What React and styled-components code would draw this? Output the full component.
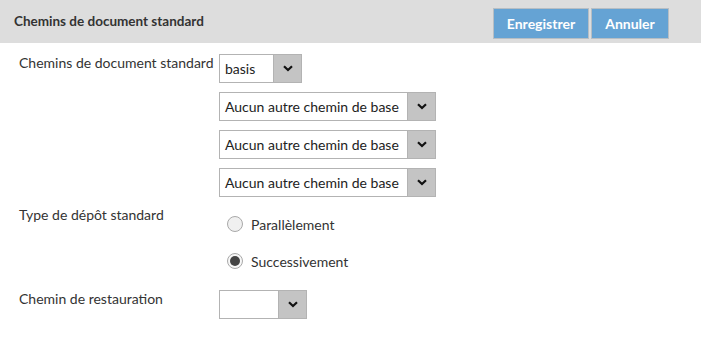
import React from "react";
import styled, { createGlobalStyle } from "styled-components";

const GlobalStyle = createGlobalStyle`
  body {
    margin: 0;
    background: #ffffff;
    font-family: Lato, "Open Sans", sans-serif;
    color: #333333;
  }
`;

const Page = styled.div`
  width: 701px;
  height: 350px;
  background: #ffffff;
`;

const Header = styled.div`
  height: 43px;
  background: #dddddd;
  display: flex;
  align-items: center;
  justify-content: space-between;
  padding: 0 32px 0 14px;
  box-sizing: border-box;
`;

const Title = styled.h1`
  margin: 0;
  font-size: 13.5px;
  font-weight: 700;
  color: #333333;
  padding-bottom: 2px;
`;

const Actions = styled.div`
  display: flex;
  gap: 2px;
  align-self: flex-start;
  margin-top: 8px;
`;

const ActionButton = styled.button`
  height: 31px;
  width: ${({ w }) => w}px;
  background: #65a3d4;
  border: 1px solid #b7bec4;
  color: #ffffff;
  font-family: inherit;
  font-size: 14px;
  font-weight: 700;
  padding: 0;
  cursor: pointer;
`;

const Form = styled.div`
  padding: 11px 0 0 19px;
  display: grid;
  grid-template-columns: 200px 1fr;
  row-gap: 9px;
`;

const Label = styled.div`
  font-size: 14px;
  line-height: 17px;
`;

const Stack = styled.div`
  display: flex;
  flex-direction: column;
  gap: ${({ gap }) => gap}px;
  padding: ${({ pad }) => pad || "0"};
`;

const SelectBox = styled.div`
  display: flex;
  width: ${({ w }) => w}px;
  height: 29px;
  border: 1px solid #b3b3b3;
  box-sizing: border-box;
  background: #ffffff;
`;

const SelectValue = styled.div`
  flex: 1;
  font-size: 14px;
  padding-left: 5px;
  display: flex;
  align-items: center;
  padding-bottom: 1px;
  color: #222222;
  white-space: nowrap;
  overflow: hidden;
`;

const SelectArrow = styled.div`
  width: 27px;
  background: #c4c4c4;
  border-left: 1px solid #b3b3b3;
  display: flex;
  align-items: center;
  justify-content: center;
`;

const RadioRow = styled.label`
  display: flex;
  align-items: center;
  height: 20px;
  gap: 8px;
  font-size: 14px;
  padding-left: 8px;
`;

const RadioCircle = styled.span`
  width: 16px;
  height: 16px;
  box-sizing: border-box;
  border-radius: 50%;
  border: 1px solid #a9a9a9;
  background: ${({ checked }) => (checked ? "#f7f7f7" : "#f0f0f0")};
  display: flex;
  align-items: center;
  justify-content: center;
  &::after {
    content: "";
    display: ${({ checked }) => (checked ? "block" : "none")};
    width: 10px;
    height: 10px;
    border-radius: 50%;
    background: #444444;
  }
`;

const Chevron = () => (
  <svg width="10" height="7" viewBox="0 0 10 7">
    <path d="M1 1.2 L5 5 L9 1.2" fill="none" stroke="#111" strokeWidth="2.2" />
  </svg>
);

const Select = ({ value, width }) => (
  <SelectBox w={width}>
    <SelectValue>{value}</SelectValue>
    <SelectArrow>
      <Chevron />
    </SelectArrow>
  </SelectBox>
);

const Radio = ({ checked, children }) => (
  <RadioRow>
    <RadioCircle checked={checked} />
    {children}
  </RadioRow>
);

export default function App() {
  return (
    <Page>
      <GlobalStyle />
      <Header>
        <Title>Chemins de document standard</Title>
        <Actions>
          <ActionButton w={96}>Enregistrer</ActionButton>
          <ActionButton w={78}>Annuler</ActionButton>
        </Actions>
      </Header>
      <Form>
        <Label>Chemins de document standard</Label>
        <Stack gap={9}>
          <Select value="basis" width={83} />
          <Select value="Aucun autre chemin de base" width={217} />
          <Select value="Aucun autre chemin de base" width={217} />
          <Select value="Aucun autre chemin de base" width={217} />
        </Stack>
        <Label>Type de dépôt standard</Label>
        <Stack gap={17} pad="8px 0 10px 0">
          <Radio>Parallèlement</Radio>
          <Radio checked>Successivement</Radio>
        </Stack>
        <Label>Chemin de restauration</Label>
        <Select value="" width={88} />
      </Form>
    </Page>
  );
}
